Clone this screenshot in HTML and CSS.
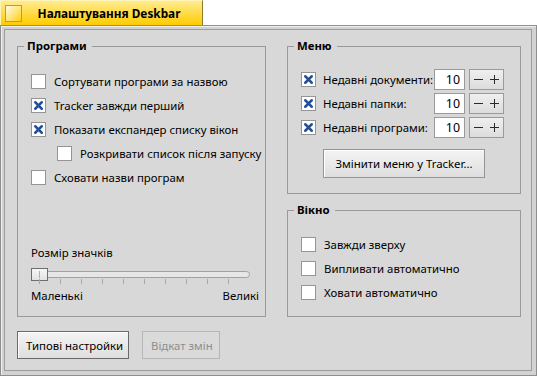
FILE: index.html
```html
<!DOCTYPE html>
<html lang="uk">
<head>
<meta charset="utf-8">
<title>Налаштування Deskbar</title>
<link rel="stylesheet" href="styles.css">
</head>
<body>
<div class="window">
  <div class="tab">
    <span class="close"></span>
    <span class="title">Налаштування Deskbar</span>
  </div>
  <div class="frame">
    <div class="content">
      <div class="columns">
        <fieldset class="group group-apps">
          <legend>Програми</legend>
          <div class="apps-body">
            <div class="check"><span class="box"></span><span>Сортувати програми за назвою</span></div>
            <div class="check"><span class="box checked"><svg viewBox="0 0 14 14"><path d="M3.5 3.5L10.5 10.5M10.5 3.5L3.5 10.5"/></svg></span><span>Tracker завжди перший</span></div>
            <div class="check"><span class="box checked"><svg viewBox="0 0 14 14"><path d="M3.5 3.5L10.5 10.5M10.5 3.5L3.5 10.5"/></svg></span><span>Показати експандер списку вікон</span></div>
            <div class="check indent"><span class="box"></span><span>Розкривати список після запуску</span></div>
            <div class="check"><span class="box"></span><span>Сховати назви програм</span></div>
            <div class="slider-block">
              <div class="slider-label">Розмір значків</div>
              <div class="slider">
                <div class="track"></div>
                <div class="thumb"></div>
                <div class="ticks"><i></i><i></i><i></i><i></i><i></i><i></i><i></i><i></i><i></i><i></i></div>
              </div>
              <div class="slider-ends"><span>Маленькі</span><span>Великі</span></div>
            </div>
          </div>
        </fieldset>
        <div class="right-col">
          <fieldset class="group group-menu">
            <legend>Меню</legend>
            <div class="menu-body">
              <div class="menu-grid">
                <span class="box checked"><svg viewBox="0 0 14 14"><path d="M3.5 3.5L10.5 10.5M10.5 3.5L3.5 10.5"/></svg></span>
                <span class="mlabel">Недавні документи:</span>
                <span class="field">10</span>
                <span class="spin"><svg viewBox="0 0 33 19"><path d="M4 9.5H13M20 9.5H29M24.5 5V14"/></svg></span>

                <span class="box checked"><svg viewBox="0 0 14 14"><path d="M3.5 3.5L10.5 10.5M10.5 3.5L3.5 10.5"/></svg></span>
                <span class="mlabel">Недавні папки:</span>
                <span class="field">10</span>
                <span class="spin"><svg viewBox="0 0 33 19"><path d="M4 9.5H13M20 9.5H29M24.5 5V14"/></svg></span>

                <span class="box checked"><svg viewBox="0 0 14 14"><path d="M3.5 3.5L10.5 10.5M10.5 3.5L3.5 10.5"/></svg></span>
                <span class="mlabel">Недавні програми:</span>
                <span class="field">10</span>
                <span class="spin"><svg viewBox="0 0 33 19"><path d="M4 9.5H13M20 9.5H29M24.5 5V14"/></svg></span>
              </div>
              <div class="center-row"><button class="btn">Змінити меню у Tracker...</button></div>
            </div>
          </fieldset>
          <fieldset class="group group-win">
            <legend>Вікно</legend>
            <div class="win-body">
              <div class="check"><span class="box"></span><span>Завжди зверху</span></div>
              <div class="check"><span class="box"></span><span>Випливати автоматично</span></div>
              <div class="check"><span class="box"></span><span>Ховати автоматично</span></div>
            </div>
          </fieldset>
        </div>
      </div>
      <div class="buttons">
        <button class="btn default">Типові настройки</button>
        <button class="btn disabled">Відкат змін</button>
      </div>
    </div>
  </div>
</div>
</body>
</html>
```

FILE: styles.css
```css
* { box-sizing: border-box; }

body {
  margin: 0;
  background: #ffffff;
  font-family: "Noto Sans", "DejaVu Sans", sans-serif;
  font-size: 11.4px;
  color: #000;
}

.window {
  width: 537px;
  height: 376px;
  display: flex;
  flex-direction: column;
}

.tab {
  width: 203px;
  height: 25px;
  flex: none;
  display: flex;
  align-items: center;
  padding-left: 4px;
  background: linear-gradient(#ffec90, #ffcb00);
  border-top: 1px solid #fff4b8;
  border-left: 1px solid #fff4b8;
  border-right: 1px solid #8c7a2a;
}

.close {
  width: 17px;
  height: 17px;
  flex: none;
  border: 1px solid #c9a200;
  background: linear-gradient(135deg, #fffce8 0%, #ffe680 50%, #ffcf10 100%);
}

.title {
  flex: 1;
  text-align: center;
  font-weight: bold;
  font-size: 11.8px;
  padding-right: 6px;
}

.frame {
  flex: 1;
  border: 1px solid #8e8e8e;
  padding: 3px 4px 4px 3px;
  background: #d2d2d2;
  box-shadow: inset 1px 1px 0 #efefef;
}

.content {
  height: 100%;
  border: 1px solid #9c9c9c;
  background: #d8d8d8;
  padding: 8px 10px 0 12px;
  display: flex;
  flex-direction: column;
}

.columns {
  height: 279px;
  display: flex;
  gap: 21px;
}

.group {
  margin: 0;
  padding: 0;
  border: 1px solid #9a9a9a;
  min-width: 0;
}

.group legend {
  margin-left: 6px;
  padding: 0 5px 0 3px;
  font-weight: bold;
  line-height: 16px;
}

.group-apps {
  width: 249px;
  flex: none;
}

.right-col {
  flex: 1;
  display: flex;
  flex-direction: column;
  gap: 8px;
}

.group-menu { height: 156px; flex: none; }
.group-win { flex: 1; }

.apps-body {
  padding: 15px 6px 0 13px;
}

.win-body {
  padding: 14px 6px 0 13px;
}

.check {
  height: 24px;
  display: flex;
  align-items: center;
  gap: 8px;
  white-space: nowrap;
}

.check.indent { padding-left: 26px; }

.box {
  width: 15px;
  height: 15px;
  flex: none;
  border: 1px solid #959595;
  background: #fff;
  display: flex;
  align-items: center;
  justify-content: center;
}

.box svg {
  width: 13px;
  height: 13px;
  fill: none;
  stroke: #24509a;
  stroke-width: 2.7;
  stroke-linecap: round;
}

.slider-block {
  margin-top: 56px;
}

.slider-label {
  line-height: 16px;
}

.slider {
  position: relative;
  height: 24px;
  margin-top: 2px;
}

.track {
  position: absolute;
  left: 0;
  top: 8px;
  width: 219px;
  height: 7px;
  border: 1px solid #a2a2a2;
  border-radius: 4px;
  background: #e6e6e6;
}

.thumb {
  position: absolute;
  left: 0;
  top: 5px;
  width: 17px;
  height: 13px;
  border: 1px solid #6e6e6e;
  background: linear-gradient(#f6f6f6, #e2e2e2);
}

.thumb::after {
  content: "";
  position: absolute;
  left: 7px;
  top: 2px;
  width: 1px;
  height: 7px;
  background: #b0b0b0;
}

.ticks {
  position: absolute;
  left: 8px;
  top: 16px;
  width: 190px;
  height: 5px;
  display: flex;
  justify-content: space-between;
}

.ticks i {
  width: 1px;
  height: 5px;
  background: #a8a8a8;
}

.slider-ends {
  display: flex;
  justify-content: space-between;
  line-height: 16px;
  margin-top: 1px;
}

.menu-body {
  padding: 15px 0 0 13px;
}

.menu-grid {
  display: grid;
  grid-template-columns: 15px 118px 31px 39px;
  grid-auto-rows: 21px;
  row-gap: 3px;
  align-items: center;
}

.mlabel {
  margin-left: 7px;
  white-space: nowrap;
}

.field {
  height: 21px;
  border: 1px solid #9a9a9a;
  background: #fff;
  text-align: right;
  padding-right: 4px;
  line-height: 19px;
  font-size: 12.4px;
}

.spin {
  height: 21px;
  margin-left: 4px;
  border: 1px solid #9a9a9a;
  background: linear-gradient(#efefef, #dcdcdc);
  display: flex;
}

.spin svg {
  width: 33px;
  height: 19px;
  fill: none;
  stroke: #2a2a2a;
  stroke-width: 1;
}

.center-row {
  display: flex;
  justify-content: center;
  margin-top: 11px;
  padding-right: 13px;
}

.btn {
  font-family: inherit;
  font-size: 11.4px;
  color: #000;
  height: 29px;
  padding: 0 11px;
  border: 1px solid #959595;
  background: linear-gradient(#f4f4f4, #dedede);
  box-shadow: inset 1px 1px 0 #ffffff;
  white-space: nowrap;
}

.buttons {
  display: flex;
  gap: 13px;
  margin-top: 14px;
}

.buttons .btn { height: 28px; padding: 0 8px; }

.btn.default {
  border-color: #6a6a6a;
  width: 112px;
}

.btn.disabled {
  width: 78px;
  color: #8e8e8e;
  border-color: #b6b6b6;
  background: #dadada;
  box-shadow: none;
}
```
